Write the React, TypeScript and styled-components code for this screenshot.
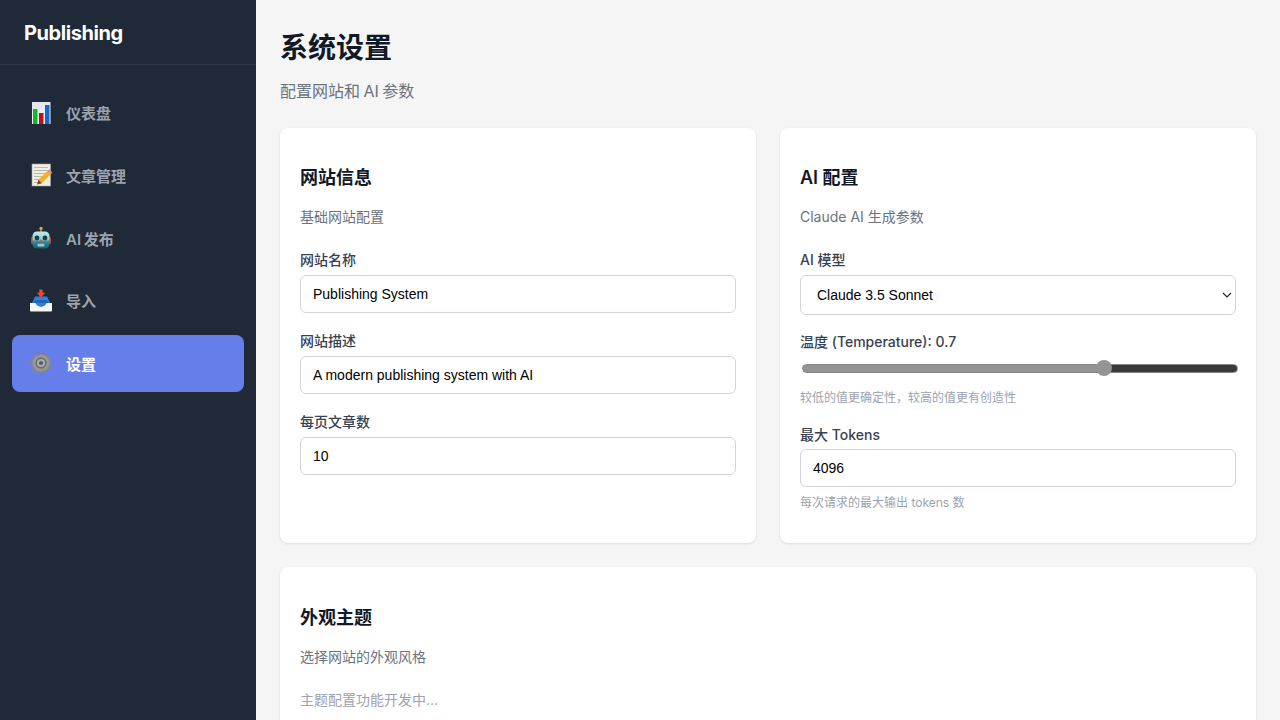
import React from 'react';
import styled, { createGlobalStyle } from 'styled-components';

const UI = `Inter, "Noto Sans CJK SC", sans-serif`;
const FIELD = `"Liberation Sans", "Noto Sans CJK SC", sans-serif`;
const CHEVRON = `url("data:image/svg+xml,%3Csvg xmlns='http://www.w3.org/2000/svg' width='10' height='6' viewBox='0 0 10 6'%3E%3Cpath d='M1 1l4 4 4-4' fill='none' stroke='%23222' stroke-width='1.100'/%3E%3C/svg%3E")`;

const Global = createGlobalStyle`
  html, body { margin: 0; height: 100%; overflow: hidden; background: #f5f5f5; }
  * { box-sizing: border-box; }
  #root { height: 100%; }
`;

const Layout = styled.div`
  display: flex;
  height: 720px;
  overflow: hidden;
  font-family: ${UI};
`;
const Sidebar = styled.aside`
  width: 256px;
  flex: none;
  background: #1f2937;
`;
const Brand = styled.div`
  height: 65px;
  padding: 2px 24px 0;
  display: flex;
  align-items: center;
  border-bottom: 1px solid #2f3a49;
  color: #fff;
  font-size: 20px;
  font-weight: 700;
  letter-spacing: -0.42px;
`;
const Nav = styled.nav`
  display: flex;
  flex-direction: column;
  gap: 6px;
  padding: 19.5px 12px;
`;
const NavItem = styled.a<{ $active?: boolean }>`
  display: flex;
  align-items: center;
  gap: 12px;
  height: 56.67px;
  padding: 0 16px;
  border-radius: 8px;
  font-size: 15px;
  font-weight: 600;
  word-spacing: -1px;
  color: ${(p) => (p.$active ? '#fff' : '#9ca3af')};
  background: ${(p) => (p.$active ? '#667eea' : 'transparent')};
`;
const IconSvg = styled.svg`
  width: 26px;
  height: 26px;
  flex: none;
`;
const Main = styled.main`
  flex: 1;
  min-width: 0;
  padding: 24px;
  background: #f5f5f5;
`;
const Title = styled.h1`
  margin: 0;
  font-size: 28px;
  line-height: 48px;
  font-weight: 700;
  color: #111827;
`;
const Subtitle = styled.p`
  margin: 6px 0 23.5px;
  font-size: 16px;
  line-height: 26px;
  word-spacing: -1px;
  color: #6b7280;
`;
const Grid = styled.div`
  display: grid;
  grid-template-columns: minmax(0, 1fr) minmax(0, 1fr);
  gap: 24px;
`;
const Card = styled.section<{ $wide?: boolean }>`
  grid-column: ${(p) => (p.$wide ? '1 / -1' : 'auto')};
  background: #fff;
  border-radius: 8px;
  box-shadow: 0 1px 3px rgba(0, 0, 0, 0.1);
  padding: 36.5px 20px 13px;
  ${(p) => (p.$wide ? 'min-height: 240px;' : '')}
`;
const CardTitle = styled.h3`
  margin: 0;
  font-size: 18px;
  line-height: 28px;
  font-weight: 600;
  color: #111827;
`;
const CardDesc = styled.p`
  margin: 15px 0 23px;
  font-size: 14px;
  line-height: 20px;
  color: #6b7280;
`;
const Field = styled.div<{ $gap?: number }>`
  margin-bottom: ${(p) => p.$gap ?? 18}px;
`;
const Label = styled.label<{ $tight?: boolean }>`
  display: block;
  margin-bottom: ${(p) => (p.$tight ? 4 : 5)}px;
  font-size: 14px;
  line-height: 20px;
  font-weight: 500;
  color: #374151;
`;
const TextInput = styled.input`
  display: block;
  width: 100%;
  height: 38px;
  padding: 0 12px;
  background: #fff;
  border: 1px solid #d1d5db;
  border-radius: 6px;
  font-family: ${FIELD};
  font-size: 14px;
  color: #000;
  outline: none;
`;
const Select = styled.select`
  display: block;
  appearance: none;
  width: 100%;
  height: 40px;
  padding: 0 16px;
  background: #fff ${CHEVRON} no-repeat right 3px center;
  border: 1px solid #d1d5db;
  border-radius: 6px;
  font-family: ${FIELD};
  font-size: 14px;
  color: #000;
  outline: none;
`;
const Range = styled.input`
  display: block;
  appearance: none;
  width: 100%;
  height: 22px;
  margin: 0 0 10px 2px;
  padding: 0;
  background: transparent;
  &::-webkit-slider-runnable-track {
    height: 9px;
    border-radius: 5px;
    border: 1px solid #858585;
    background: linear-gradient(to right, #949494 0 69%, #3a3a3a 69% 100%);
  }
  &::-webkit-slider-thumb {
    appearance: none;
    width: 16px;
    height: 16px;
    margin-top: -4.500px;
    border-radius: 50%;
    background: #949494;
  }
`;
const Hint = styled.p`
  margin: 7px 0 0;
  font-size: 12px;
  line-height: 18px;
  color: #9ca3af;
`;
const Pending = styled.p`
  margin: 0;
  font-size: 14px;
  line-height: 20px;
  color: #9ca3af;
`;

const ChartIcon = () => (
  <IconSvg viewBox="0 0 26 26">
    <defs>
      <linearGradient id="chartBg" x1="0" y1="0" x2="0" y2="1">
        <stop offset="0" stopColor="#dfe6ee" />
        <stop offset="1" stopColor="#f6f8fb" />
      </linearGradient>
    </defs>
    <rect x="4" y="2" width="18.500" height="22" fill="url(#chartBg)" />
    <rect x="5" y="9" width="4.500" height="15" fill="#13b52e" />
    <rect x="11" y="13" width="4.500" height="11" fill="#c40f1b" />
    <rect x="17" y="5" width="4.500" height="19" fill="#1569cc" />
  </IconSvg>
);
const MemoIcon = () => (
  <IconSvg viewBox="0 0 26 26">
    <rect x="4" y="2" width="18.500" height="22" fill="#efede4" stroke="#a5a5a0" strokeWidth="0.600" />
    <path d="M6 5.500h14M6 8.500h14M6 11.500h11M6 14.500h8M6 17.500h6M6 20.500h4" stroke="#b3b2aa" strokeWidth="0.900" />
    <path d="M9 22.500l1.500-4.800L19.500 9l3.200 3.200-9 9z" fill="#f3b021" />
    <path d="M19.500 9l1.700-1.700 3.200 3.200-1.700 1.700z" fill="#e4848c" />
    <path d="M9 22.500l1.500-4.800 3.200 3.500z" fill="#6a5230" />
  </IconSvg>
);
const RobotIcon = () => (
  <IconSvg viewBox="0 0 26 26">
    <defs>
      <linearGradient id="robotHead" x1="0" y1="0" x2="0" y2="1">
        <stop offset="0" stopColor="#c4e9ea" />
        <stop offset="0.450" stopColor="#8fd0d6" />
        <stop offset="0.600" stopColor="#2d8b9c" />
        <stop offset="1" stopColor="#17606f" />
      </linearGradient>
    </defs>
    <circle cx="13" cy="3.400" r="1.600" fill="#f2a52a" />
    <rect x="12.300" y="4.500" width="1.400" height="2.500" fill="#8e9ea5" />
    <rect x="3" y="12" width="3" height="7" rx="1.200" fill="#c8453f" />
    <rect x="20" y="12" width="3" height="7" rx="1.200" fill="#c8453f" />
    <rect x="4.500" y="6.500" width="17" height="17" rx="4.500" fill="url(#robotHead)" />
    <circle cx="9" cy="13" r="2.400" fill="#1f3d49" />
    <circle cx="17" cy="13" r="2.400" fill="#1f3d49" />
    <path d="M13 14l2 3.200h-4z" fill="#e2483f" />
    <rect x="9.500" y="18.800" width="7" height="2.600" rx="1" fill="#9fc7cd" />
  </IconSvg>
);
const InboxIcon = () => (
  <IconSvg viewBox="0 0 26 26">
    <path d="M4 15L7 8.500h12l3 6.500z" fill="#2f83d6" />
    <rect x="11.300" y="1.500" width="3.400" height="4" fill="#f0433a" />
    <path d="M8.800 4.800h8.400L13 9.800z" fill="#f0433a" />
    <path d="M7 12h12l1.500 3H5.500z" fill="#1f66b8" />
    <path d="M2 15h6.500c.5 2.200 2.200 3.500 4.500 3.500s4-1.300 4.500-3.500H24v7.500a1 1 0 0 1-1 1H3a1 1 0 0 1-1-1z" fill="#f4f6f8" />
    <path d="M7.500 15h11c-.6 2-2.600 3.500-5.500 3.500s-4.900-1.500-5.500-3.500z" fill="#2f83d6" />
  </IconSvg>
);
const GearIcon = () => (
  <IconSvg viewBox="0 0 26 26">
    <g fill="#858585">
      {[0, 30, 60, 90, 120, 150].map((a) => (
        <rect key={a} x="11.600" y="2" width="2.800" height="22" rx="0.700" transform={`rotate(${a} 13 13)`} />
      ))}
    </g>
    <circle cx="13" cy="13" r="8.600" fill="#969696" />
    <circle cx="13" cy="13" r="5.500" fill="#6a6a6a" />
    <circle cx="13" cy="13" r="4.100" fill="#acacac" />
    <circle cx="13" cy="13" r="2.100" fill="#555b75" />
  </IconSvg>
);

const items = [
  { label: '仪表盘', icon: <ChartIcon /> },
  { label: '文章管理', icon: <MemoIcon /> },
  { label: 'AI 发布', icon: <RobotIcon /> },
  { label: '导入', icon: <InboxIcon /> },
  { label: '设置', icon: <GearIcon />, active: true },
];

export default function App() {
  return (
    <Layout>
      <Global />
      <Sidebar>
        <Brand>Publishing</Brand>
        <Nav>
          {items.map((it) => (
            <NavItem key={it.label} $active={it.active}>
              {it.icon}
              {it.label}
            </NavItem>
          ))}
        </Nav>
      </Sidebar>
      <Main>
        <Title>系统设置</Title>
        <Subtitle>配置网站和 AI 参数</Subtitle>
        <Grid>
          <Card>
            <CardTitle>网站信息</CardTitle>
            <CardDesc>基础网站配置</CardDesc>
            <Field>
              <Label>网站名称</Label>
              <TextInput defaultValue="Publishing System" />
            </Field>
            <Field>
              <Label>网站描述</Label>
              <TextInput defaultValue="A modern publishing system with AI" />
            </Field>
            <Field>
              <Label>每页文章数</Label>
              <TextInput type="number" defaultValue="10" />
            </Field>
          </Card>
          <Card>
            <CardTitle>AI 配置</CardTitle>
            <CardDesc>Claude AI 生成参数</CardDesc>
            <Field $gap={17}>
              <Label>AI 模型</Label>
              <Select defaultValue="sonnet">
                <option value="sonnet">Claude 3.5 Sonnet</option>
              </Select>
            </Field>
            <Field>
              <Label>温度 (Temperature): 0.7</Label>
              <Range type="range" min={0} max={1} step={0.1} defaultValue={0.7} />
              <Hint>较低的值更确定性，较高的值更有创造性</Hint>
            </Field>
            <Field>
              <Label $tight>最大 Tokens</Label>
              <TextInput type="number" defaultValue="4096" />
              <Hint>每次请求的最大输出 tokens 数</Hint>
            </Field>
          </Card>
          <Card $wide>
            <CardTitle>外观主题</CardTitle>
            <CardDesc>选择网站的外观风格</CardDesc>
            <Pending>主题配置功能开发中...</Pending>
          </Card>
        </Grid>
      </Main>
    </Layout>
  );
}
